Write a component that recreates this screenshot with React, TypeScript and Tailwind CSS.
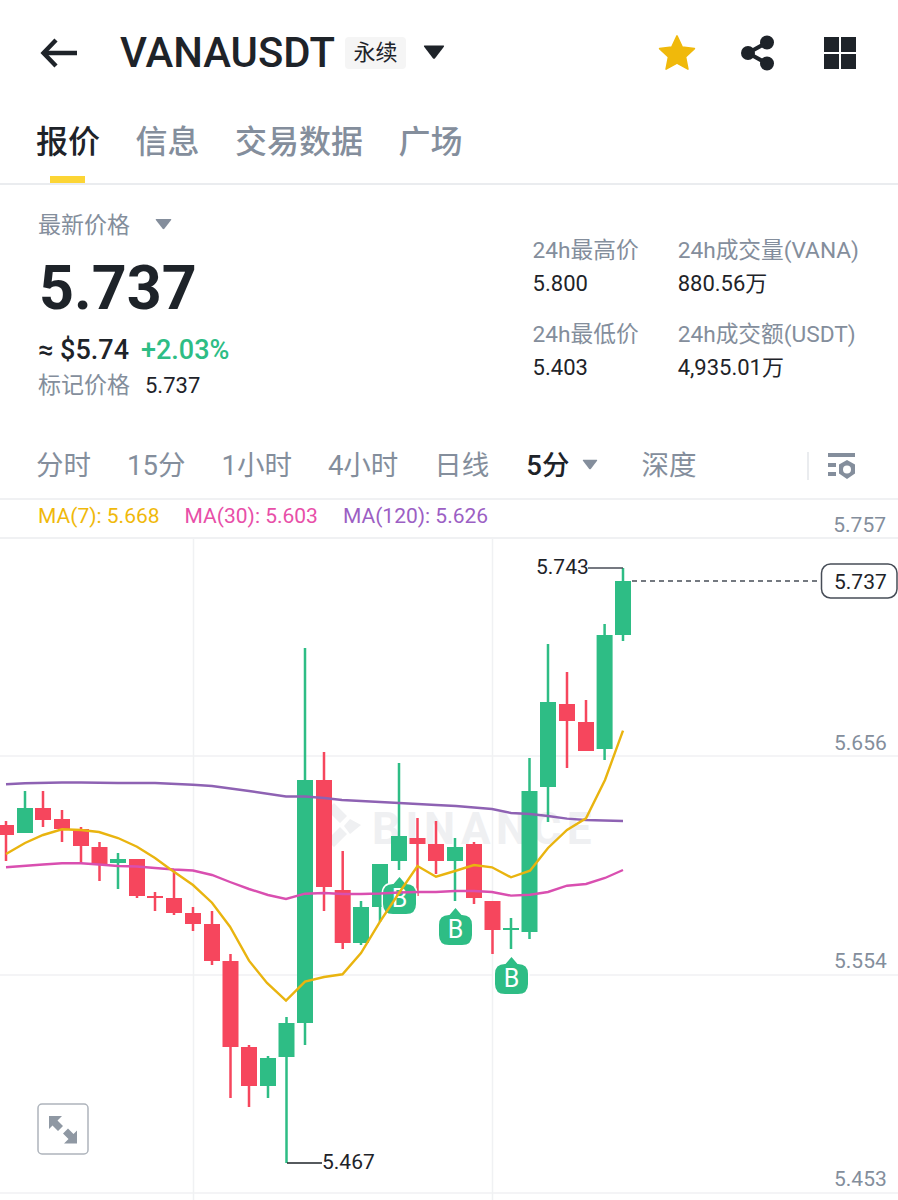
import React from "react";

type C = [number, "g" | "r", number, number, number, number];
const candles: C[] = [
  [6, "r", 821, 825, 835, 861],
  [25, "g", 791, 808, 833, 833],
  [43, "r", 791, 808, 820, 827],
  [62, "r", 810, 819, 829, 842],
  [81, "r", 827, 829, 846, 863],
  [99.5, "r", 842, 847, 865, 881],
  [118, "g", 853, 859, 863, 889],
  [137, "r", 859, 859, 896, 898],
  [155, "r", 892, 896, 898, 911],
  [174, "r", 870, 898, 913, 915],
  [193, "r", 907, 913, 924, 931],
  [212, "r", 911, 924, 961, 965],
  [230.5, "r", 954, 961, 1047, 1098],
  [249, "r", 1045, 1047, 1086, 1107],
  [268, "g", 1056, 1058, 1086, 1098],
  [286.5, "g", 1017, 1023, 1057, 1163],
  [305, "g", 648, 780, 1023, 1045],
  [324, "r", 752, 780, 887, 911],
  [342.7, "r", 851, 890, 943, 949],
  [361, "g", 901, 907, 943, 945],
  [380, "g", 864, 864, 907, 922],
  [399, "g", 763, 836, 861, 870],
  [417.5, "r", 818, 838, 844, 896],
  [436, "r", 821, 844, 861, 874],
  [455, "g", 838, 847, 861, 901],
  [474, "r", 842, 844, 898, 904],
  [492.5, "r", 901, 901, 930, 954],
  [511, "g", 918, 928, 930, 949],
  [529.5, "g", 758, 791, 932, 939],
  [548, "g", 644, 702, 787, 822],
  [567, "r", 672, 704, 721, 768],
  [586, "r", 700, 722, 751, 751],
  [604.6, "g", 624, 635, 749, 760],
  [623, "g", 568, 581, 635, 641],
];

const ma120 = "6,784.3 25,783.3 62,782.5 81,782.5 118,783 155,783 193,784.7 212,786 249,791 286,796.5 305,796.5 324,798 342,800 361,801 399,803 436,805 456,806 492,809 511,813 530,814 548,816 567,818.6 586,820 604,820.5 623,821";
const ma30 = "6,867.3 43,864.5 62,863.3 81,863.3 99,864.5 118,866 137,866.5 155,868 174,869.5 193,870.5 212,875 230,882 249,889 268,895 286,899 305,893.7 324,893 343,894 361,894 380,893.5 399,892.5 418,892 436,892 455,891 474,891 492,892 511,895.6 530,894.7 548,892 567,885.7 586,884 605,878 623,870";
const ma7 = "6,854 25,843 43,835 62,829.3 81,830 99,832 118,838 137,846.7 155,858 170,869 193,885 212,902.7 230,926.7 249,960.7 267,983 286,1000.7 305,981.7 324,977 342.5,974.3 361,953 380,921.7 399,893 417.5,866 436,876.7 455,871 474,865 492,867.3 511,877.3 530,870.7 548,848 567,830 586,818.3 605,780 623,730.7";

const GREEN = "#2ebd85";
const RED = "#f6465d";

function Marker({ cx, top }: { cx: number; top: number }) {
  const b = top + 37;
  const t = top + 7;
  const r = 10;
  const w = 16.5;
  return (
    <g>
      <path
        d={`M${cx} ${top} L${cx + 6} ${t} L${cx + w - r} ${t} Q${cx + w} ${t} ${cx + w} ${t + r} L${cx + w} ${b - r} Q${cx + w} ${b} ${cx + w - r} ${b} L${cx - w + r} ${b} Q${cx - w} ${b} ${cx - w} ${b - r} L${cx - w} ${t + r} Q${cx - w} ${t} ${cx - w + r} ${t} L${cx - 6} ${t} Z`}
        fill={GREEN}
        stroke="#fff"
        strokeWidth="3"
        paintOrder="stroke"
      />
      <text x={cx} y={top + 30} textAnchor="middle" fontSize="25" fill="#fff">
        B
      </text>
    </g>
  );
}

function Tri({ cls }: { cls: string }) {
  return (
    <svg viewBox="0 0 20 14" className={cls} fill="currentColor">
      <path d="M1.5 1 H18.5 Q19.6 1 19 2.2 L11 12.6 Q10 13.6 9 12.6 L1 2.2 Q0.4 1 1.5 1 Z" />
    </svg>
  );
}

function Stat({ label, value }: { label: string; value: string }) {
  return (
    <div className="flex flex-col">
      <span className="text-[22.7px] leading-[32px] text-[#848e9c] whitespace-nowrap">{label}</span>
      <span className="text-[22px] leading-[30px] mt-[2px] text-[#1e2329] whitespace-nowrap">{value}</span>
    </div>
  );
}

export default function App() {
  return (
    <div
      className="w-[898px] h-[1200px] overflow-hidden bg-white text-[#1e2329]"
      style={{ fontFamily: 'Roboto, "Noto Sans CJK SC", sans-serif' }}
    >
      {/* Header */}
      <div className="h-[108px] flex items-center pl-[40px] pr-[42px] pb-[2px]">
        <svg viewBox="0 0 38 30" className="w-[38px] h-[30px] text-[#1e2329]" fill="none" stroke="currentColor" strokeWidth="4.4">
          <path d="M37 15 H4" />
          <path d="M16 2 L3.5 15 L16 28" />
        </svg>
        <span className="ml-[42px] text-[41.8px] font-medium leading-none whitespace-nowrap">VANAUSDT</span>
        <span className="ml-[10px] w-[61px] h-[32px] rounded-[4px] bg-[#f5f5f5] flex items-center justify-center text-[22px] leading-none">
          永续
        </span>
        <Tri cls="ml-[17px] w-[22px] h-[16px] text-[#1e2329] -mt-[3px]" />
        <div className="ml-auto flex items-center">
          <svg viewBox="0 0 24 24" className="w-[38px] h-[38px]" fill="#f0b90b">
            <path d="M12 1.2 L15.3 8.3 L23 9.2 L17.4 14.5 L18.9 22.2 L12 18.4 L5.1 22.2 L6.6 14.5 L1 9.2 L8.7 8.3 Z" stroke="#f0b90b" strokeWidth="1" strokeLinejoin="round" />
          </svg>
          <svg viewBox="0 0 36 36" className="ml-[44px] w-[36px] h-[36px]" fill="#1e2329">
            <circle cx="27" cy="7.5" r="7" />
            <circle cx="27" cy="28.5" r="7" />
            <circle cx="8" cy="18" r="7" />
            <path d="M8 18 L27 7.5 M8 18 L27 28.5" stroke="#1e2329" strokeWidth="4" />
          </svg>
          <div className="ml-[48px] grid grid-cols-2 gap-[2px] w-[32px] h-[32px]">
            <div className="bg-[#1e2329]" />
            <div className="bg-[#1e2329]" />
            <div className="bg-[#1e2329]" />
            <div className="bg-[#1e2329]" />
          </div>
        </div>
      </div>

      {/* Tabs */}
      <div className="h-[77px] border-b-2 border-[#eaecef] relative flex items-start pl-[36px] gap-[35.5px] text-[32px] leading-[68px] text-[#848e9c] font-medium">
        <span className="relative text-[#1e2329] h-[75px]">
          报价
          <span className="absolute left-[14px] bottom-0 w-[35px] h-[7px] bg-[#fcd535]" />
        </span>
        <span>信息</span>
        <span>交易数据</span>
        <span>广场</span>
      </div>

      {/* Stats */}
      <div className="h-[247px] flex justify-between pl-[38px] pr-[39px]">
        <div className="flex flex-col pt-[25px]">
          <div className="flex items-center text-[23px] leading-[32px] text-[#848e9c]">
            最新价格
            <Tri cls="ml-[25px] w-[17px] h-[12px] text-[#848e9c] -mt-[4px]" />
          </div>
          <div className="mt-[11px] text-[61px] leading-[70px] font-bold ml-[1px]">5.737</div>
          <div className="mt-[10px] flex items-center text-[27px] leading-[34px] font-medium">
            <span>≈ $5.74</span>
            <span className="ml-[12px] text-[#2ebd85]">+2.03%</span>
          </div>
          <div className="mt-[3px] flex items-center leading-[32px]">
            <span className="text-[23px] text-[#848e9c]">标记价格</span>
            <span className="ml-[15px] text-[22px]">5.737</span>
          </div>
        </div>
        <div className="flex gap-[39px] pt-[50px]">
          <div className="flex flex-col gap-[20px]">
            <Stat label="24h最高价" value="5.800" />
            <Stat label="24h最低价" value="5.403" />
          </div>
          <div className="flex flex-col gap-[20px]">
            <Stat label="24h成交量(VANA)" value="880.56万" />
            <Stat label="24h成交额(USDT)" value="4,935.01万" />
          </div>
        </div>
      </div>

      {/* Interval row */}
      <div className="h-[68px] border-b-2 border-[#f0f1f3] flex items-center pl-[36px] pr-[42px] pt-[2px] text-[27.5px] text-[#848e9c]">
        <span>分时</span>
        <span className="ml-[36px]">15分</span>
        <span className="ml-[36px]">1小时</span>
        <span className="ml-[36px]">4小时</span>
        <span className="ml-[36px]">日线</span>
        <span className="ml-[37px] text-[#1e2329] font-medium">5分</span>
        <Tri cls="ml-[12px] w-[16px] h-[11px] text-[#848e9c] -mt-[4px]" />
        <span className="ml-[44px]">深度</span>
        <div className="ml-auto w-[2px] h-[28px] bg-[#eaecef]" />
        <svg viewBox="0 0 28 28" className="ml-[19px] w-[28px] h-[28px]" fill="#848e9c">
          <rect x="0" y="1" width="27" height="4" />
          <rect x="0" y="11" width="8" height="4" />
          <rect x="0" y="20" width="8" height="4" />
          <path fillRule="evenodd" d="M19 8 L27 12.5 V21.5 L19 27 L11 21.5 V12.5 Z M19 13.5 A4 4 0 1 0 19 21.5 A4 4 0 1 0 19 13.5 Z" />
        </svg>
      </div>

      {/* MA legend */}
      <div className="h-[39px] border-b-2 border-[#f0f1f3] flex items-center pl-[38px] pr-[12px] pb-[3px] text-[21px] whitespace-nowrap">
        <span className="text-[#f0b90b]">MA(7): 5.668</span>
        <span className="ml-[25px] text-[#e84fa8]">MA(30): 5.603</span>
        <span className="ml-[25px] text-[#9c5fc4]">MA(120): 5.626</span>
        <span className="ml-auto mt-[17px] text-[#848e9c]">5.757</span>
      </div>

      {/* Chart */}
      <svg viewBox="0 539 898 661" className="block w-[898px] h-[661px]" style={{ fontFamily: "Roboto, sans-serif" }}>
        <g stroke="#f0f1f3" strokeWidth="1.5">
          <line x1="0" x2="898" y1="756" y2="756" />
          <line x1="0" x2="898" y1="975" y2="975" />
          <line x1="0" x2="898" y1="1193" y2="1193" />
          <line x1="193.5" x2="193.5" y1="539" y2="1200" />
          <line x1="492.5" x2="492.5" y1="539" y2="1200" />
        </g>

        {/* watermark */}
        <g fill="#eff0f2">
          <path d="M334 803 L347 816 L340 823 L327 810 Z M350 819 L361 825 L350 834 L344 826 Z M334 847 L347 834 L340 827 L327 840 Z" />
          <text x="372" y="844" fontSize="44" fontWeight="700" letterSpacing="5.5">BINANCE</text>
        </g>

        {candles.map(([x, d, h, o, c, l]) => {
          const col = d === "g" ? GREEN : RED;
          return (
            <g key={x} fill={col}>
              <rect x={x - 1.25} y={h} width="2.5" height={l - h} />
              <rect x={x - 8} y={o} width="16" height={Math.max(c - o, 2)} />
            </g>
          );
        })}

        <Marker cx={399.5} top={877} />
        <Marker cx={455.5} top={908} />
        <Marker cx={511.5} top={957} />

        <polyline points={ma120} fill="none" stroke="#8e62b3" strokeWidth="2.4" />
        <polyline points={ma30} fill="none" stroke="#d94fb0" strokeWidth="2.4" />
        <polyline points={ma7} fill="none" stroke="#e9b40f" strokeWidth="2.4" />

        {/* high / low callouts */}
        <path d="M588 568 H623" stroke="#474d57" strokeWidth="1.5" fill="none" />
        <text x="536" y="574" fontSize="21" fill="#1e2329">5.743</text>
        <path d="M287 1163 H322" stroke="#1e2329" strokeWidth="1.5" fill="none" />
        <text x="322" y="1169" fontSize="21" fill="#1e2329">5.467</text>

        {/* last price */}
        <line x1="632" x2="821" y1="581" y2="581" stroke="#474d57" strokeWidth="1.5" strokeDasharray="5 4" />
        <rect x="821.5" y="564" width="75.5" height="34" rx="9" fill="#fff" stroke="#474d57" strokeWidth="1.5" />
        <text x="834" y="589" fontSize="21" fill="#1e2329">5.737</text>

        {/* axis */}
        <g fontSize="21" fill="#848e9c">
          <text x="834" y="750">5.656</text>
          <text x="834" y="968">5.554</text>
          <text x="834" y="1186">5.453</text>
        </g>

        {/* expand */}
        <rect x="38" y="1104" width="50" height="50" rx="4" fill="#fff" stroke="#aeb4bc" strokeWidth="1.5" />
        <g fill="#8f98a3">
          <path d="M49 1116 H62 L57.5 1120.5 L63 1126 L58 1131 L52.5 1125.5 L49 1129 Z" />
          <path d="M77 1143.5 H64 L68.5 1139 L63 1133.5 L68 1128.5 L73.5 1134 L77 1130.5 Z" />
        </g>
      </svg>
    </div>
  );
}
